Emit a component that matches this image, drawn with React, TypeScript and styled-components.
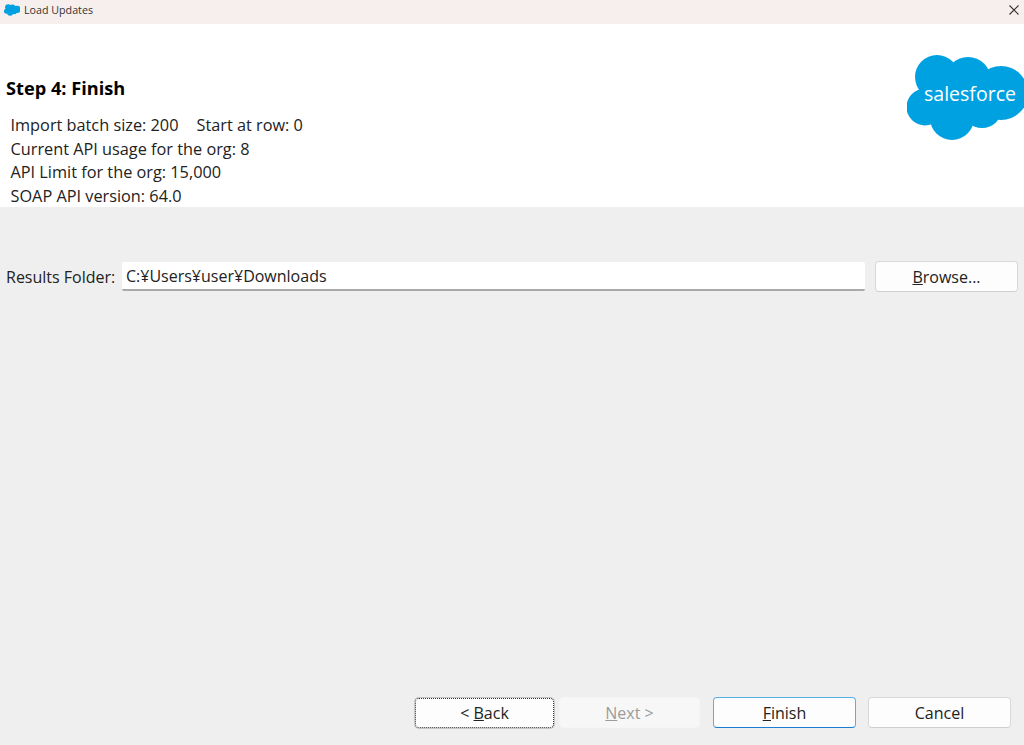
import React from "react";
import styled, { createGlobalStyle } from "styled-components";

const Global = createGlobalStyle`
  html, body { margin: 0; padding: 0; background: #efefef; }
  * { box-sizing: border-box; }
`;

const Window = styled.div`
  width: 1024px;
  height: 745px;
  overflow: hidden;
  display: flex;
  flex-direction: column;
  background: #efefef;
  color: #1c1c1c;
  font-family: "Open Sans", "Noto Sans", sans-serif;
  font-size: 16px;
`;

const TitleBar = styled.div`
  height: 24px;
  flex: none;
  display: flex;
  align-items: center;
  padding: 0 4px 4px 4px;
  gap: 4px;
  background: #f7efed;
`;

const TitleText = styled.span`
  font-size: 10.7px;
  color: #333;
  flex: 1;
`;

const Header = styled.div`
  height: 183px;
  flex: none;
  display: flex;
  justify-content: space-between;
  background: #fff;
`;

const HeaderText = styled.div`
  display: flex;
  flex-direction: column;
  padding: 51px 0 0 6px;
`;

const StepTitle = styled.h1`
  margin: 0 0 13px;
  font-size: 18.2px;
  line-height: 26px;
  font-weight: 700;
  color: #000;
`;

const InfoLine = styled.div`
  padding-left: 4.5px;
  font-size: 16.3px;
  line-height: 23.7px;
  white-space: pre;
  color: #222;
`;

const StartAt = styled.span`
  margin-left: 18px;
`;

const LogoSlot = styled.div`
  padding-top: 31px;
  width: 117px;
  flex: none;
`;

const FolderRow = styled.div`
  margin-top: 54px;
  display: flex;
  align-items: center;
  padding: 0 6px;
`;

const FolderLabel = styled.label`
  width: 116px;
  flex: none;
  color: #222;
`;

const FolderInput = styled.div`
  width: 743px;
  height: 29px;
  flex: none;
  margin-right: 10px;
  padding: 0 4px;
  display: flex;
  align-items: center;
  background: #fff;
  border-bottom: 2px solid #a9a9a9;
  border-radius: 2px;
  color: #222;
  white-space: pre;
`;

const Spacer = styled.div`
  flex: 1;
`;

const Button = styled.button<{ $width: number; $variant?: "focus" | "primary" | "disabled" }>`
  width: ${(p) => p.$width}px;
  height: ${(p) => (p.$variant === "focus" ? 30 : 31)}px;
  flex: none;
  padding: 0;
  font: inherit;
  border-radius: 4px;
  background: ${(p) => (p.$variant === "disabled" ? "#f7f7f7" : "#fdfdfd")};
  color: ${(p) => (p.$variant === "disabled" ? "#9b9b9b" : "#222")};
  border: 1px
    ${(p) => (p.$variant === "focus" ? "dotted" : "solid")}
    ${(p) =>
      p.$variant === "primary"
        ? "#5aaee8"
        : p.$variant === "disabled"
          ? "#f5f5f5"
          : p.$variant === "focus"
            ? "#333"
            : "#d8d8d8"};
  border-bottom-color: ${(p) =>
    p.$variant === "primary"
      ? "#1a7fd4"
      : p.$variant === "disabled"
        ? "#f5f5f5"
        : p.$variant === "focus"
          ? "#333"
          : "#cfcfcf"};
  box-shadow: ${(p) => (p.$variant === "focus" ? "0 0 0 1px #c4c4c4" : "none")};
`;

const Footer = styled.div`
  display: flex;
  justify-content: flex-end;
  align-items: center;
  gap: 12px;
  padding: 0 13px 17px 0;
`;

const NavGroup = styled.div`
  display: flex;
  align-items: center;
  gap: 5px;
  margin-right: 1px;
`;

const Cloud = ({ width, height }: { width: number; height: number }) => (
  <svg width={width} height={height} viewBox="907 55 117 85" aria-hidden="true">
    <g fill="#00a1e0">
      <circle cx="937" cy="77" r="22" />
      <circle cx="968" cy="80" r="23" />
      <circle cx="1001" cy="93" r="27" />
      <circle cx="925" cy="107" r="18.5" />
      <circle cx="952" cy="118" r="22" />
      <circle cx="982" cy="108" r="20" />
      <rect x="925" y="80" width="75" height="35" />
    </g>
    {width > 50 && (
      <text
        x="924"
        y="101"
        fill="#fff"
        fontFamily="'Open Sans', sans-serif"
        fontSize="19.5"
        fontWeight="500"
        textLength="92"
        lengthAdjust="spacingAndGlyphs"
      >
        salesforce
      </text>
    )}
  </svg>
);

const CloseIcon = () => (
  <svg width="12" height="12" viewBox="0 0 12 12" aria-hidden="true">
    <path d="M1.5 1.5 L10.5 10.5 M10.5 1.5 L1.5 10.5" stroke="#333" strokeWidth="1.1" fill="none" />
  </svg>
);

export default function App() {
  return (
    <Window>
      <Global />
      <TitleBar>
        <Cloud width={16} height={12} />
        <TitleText>Load Updates</TitleText>
        <CloseIcon />
      </TitleBar>
      <Header>
        <HeaderText>
          <StepTitle>Step 4: Finish</StepTitle>
          <InfoLine>
            Import batch size: 200
            <StartAt>Start at row: 0</StartAt>
          </InfoLine>
          <InfoLine>Current API usage for the org: 8</InfoLine>
          <InfoLine>API Limit for the org: 15,000</InfoLine>
          <InfoLine>SOAP API version: 64.0</InfoLine>
        </HeaderText>
        <LogoSlot>
          <Cloud width={117} height={85} />
        </LogoSlot>
      </Header>
      <FolderRow>
        <FolderLabel>Results Folder:</FolderLabel>
        <FolderInput>C:¥Users¥user¥Downloads</FolderInput>
        <Button $width={143}>
          <u>B</u>rowse...
        </Button>
      </FolderRow>
      <Spacer />
      <Footer>
        <NavGroup>
          <Button $width={139} $variant="focus">
            {"< "}
            <u>B</u>ack
          </Button>
          <Button $width={141} $variant="disabled">
            <u>N</u>ext {">"}
          </Button>
        </NavGroup>
        <Button $width={143} $variant="primary">
          <u>F</u>inish
        </Button>
        <Button $width={143}>Cancel</Button>
      </Footer>
    </Window>
  );
}
